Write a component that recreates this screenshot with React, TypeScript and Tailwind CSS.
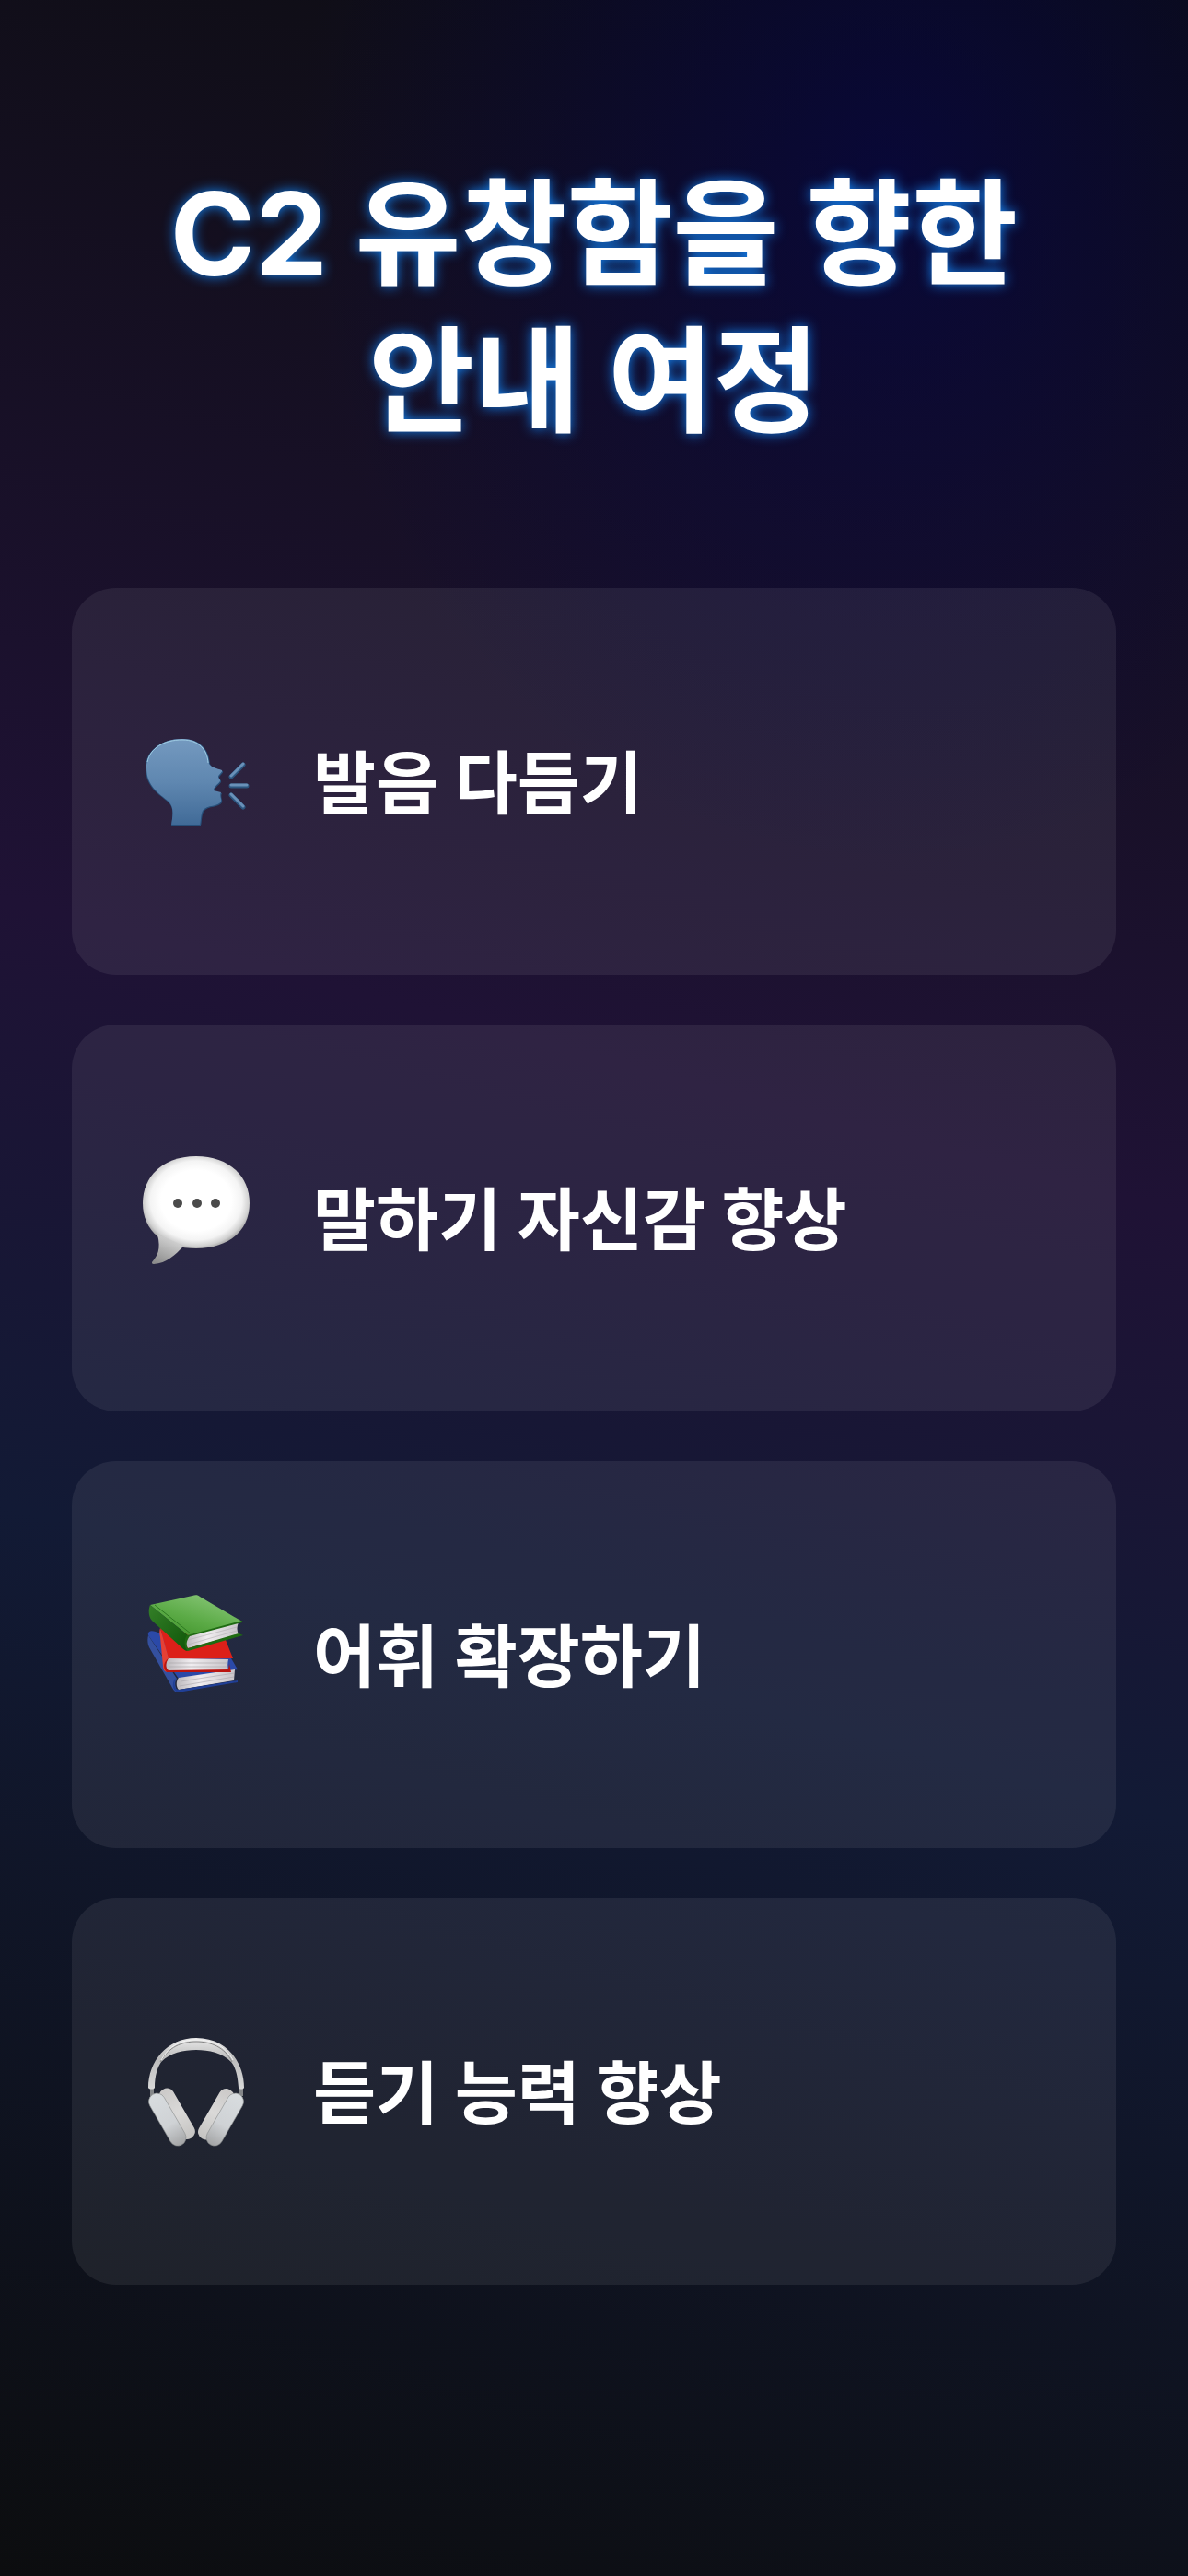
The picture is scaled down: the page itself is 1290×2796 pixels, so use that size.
import React from 'react';

const SpeakingHeadIcon: React.FC = () => (
  <svg viewBox="0 -5 150 150" className="w-full" aria-hidden="true">
    <defs>
      <linearGradient id="head" x1="0" y1="0" x2="0" y2="1">
        <stop offset="0" stopColor="#7499bf" />
        <stop offset="0.5" stopColor="#5f87b0" />
        <stop offset="1" stopColor="#406a97" />
      </linearGradient>
    </defs>
    <g strokeLinecap="round" strokeWidth="5">
      <path d="M111 63L124 50M111 73H128M111 83L124 96" stroke="#2c567f" />
      <path d="M111 62L124 49M111 72H128M111 82L124 95" stroke="#6990b8" strokeWidth="3" />
    </g>
    <path
      d="M46 117C47 108 50 98 43 91C33 82 18 75 18 53C18 35 35 22 58 22C78 22 87 34 88 49C89 53 97 55 102 57C103 59 98 62 98 64C98 66 101 67 100 69C97 73 93 75 92 79L101 81C99 85 102 88 101 91C98 97 86 94 81 101C79 105 79 113 78 117Z"
      fill="#274f79"
    />
    <path
      d="M46 116C47 107 50 97 43 90C33 81 19 74 19 53C19 35 35 22 58 22C77 22 86 34 87 49C89 53 96 54 101 56C102 58 97 61 97 63C97 65 100 66 99 68C96 72 92 74 92 78L100 80C98 84 101 87 100 90C97 96 85 93 80 100C78 104 78 112 77 116Z"
      fill="url(#head)"
    />
    <path d="M20 47C23 32 38 23 58 23C76 23 85 34 86 48" fill="none" stroke="#9ecbe2" strokeWidth="1" />
  </svg>
);

const SpeechBubbleIcon: React.FC = () => (
  <svg viewBox="0 9 150 150" className="w-full" aria-hidden="true">
    <defs>
      <radialGradient id="bubble" cx="0.5" cy="0.48" r="0.55">
        <stop offset="0.6" stopColor="#ffffff" />
        <stop offset="0.78" stopColor="#f4f4f4" />
        <stop offset="0.9" stopColor="#d0d0d0" />
        <stop offset="1" stopColor="#8f8f8f" />
      </radialGradient>
      <linearGradient id="tail" x1="0.2" y1="1" x2="0.7" y2="0">
        <stop offset="0" stopColor="#8c8c8c" />
        <stop offset="1" stopColor="#dcdcdc" />
      </linearGradient>
    </defs>
    <path
      d="M73 15C108 15 131 36 131 66C131 96 108 115 73 115C38 115 15 96 15 66C15 36 38 15 73 15Z"
      fill="url(#bubble)"
    />
    <path d="M31 100C35 116 31 123 25 130C25 131 25 132 27 132C41 131 50 122 59 113C52 108 42 104 31 100Z" fill="url(#tail)" />
    <g fill="#4a4a4a">
      <circle cx="53" cy="66" r="5" />
      <circle cx="74" cy="66" r="5" />
      <circle cx="94" cy="66" r="5" />
    </g>
  </svg>
);

const BooksIcon: React.FC = () => (
  <svg viewBox="0 8 150 150" className="w-full" aria-hidden="true">
    <defs>
      <linearGradient id="green" x1="0" y1="1" x2="0.7" y2="0">
        <stop offset="0" stopColor="#3c9026" />
        <stop offset="0.5" stopColor="#5cab47" />
        <stop offset="1" stopColor="#86c575" />
      </linearGradient>
      <linearGradient id="greenSpine" x1="0" y1="0" x2="1" y2="1">
        <stop offset="0" stopColor="#347f28" />
        <stop offset="1" stopColor="#0f5609" />
      </linearGradient>
      <linearGradient id="pages" x1="0" y1="0" x2="1" y2="0">
        <stop offset="0" stopColor="#bdb9bd" />
        <stop offset="0.4" stopColor="#f0edf0" />
        <stop offset="1" stopColor="#c9c5c9" />
      </linearGradient>
    </defs>
    {/* blue book */}
    <path d="M21 60C20 56 23 54 29 56L111 85L118 97L54 107Z" fill="#2b49a8" />
    <path d="M21 60L52 107C49 111 50 117 53 122C50 122 48 119 46 115L22 73C20 69 20 64 21 60Z" fill="#34509f" />
    <path d="M54 106L115 97L114 109L54 119C51 116 51 110 54 106Z" fill="url(#pages)" />
    <path d="M56 110L114 101M55 115L114 105" stroke="#aaa6ac" strokeWidth="0.6" />
    <path d="M51 106C48 112 50 119 54 119L118 109V111L53 122C47 120 46 111 51 106Z" fill="#203f96" />
    {/* red book */}
    <path d="M34 52L105 65L113 85L43 86Z" fill="#dc2019" />
    <path d="M34 52L43 85C39 90 39 95 42 100C38 100 37 96 37 93L34 62C33 58 33 55 34 52Z" fill="#e64035" />
    <path d="M43 85L108 86C107 90 107 94 108 98L42 99C39 94 40 88 43 85Z" fill="url(#pages)" />
    <path d="M43 90H107M43 94H107" stroke="#aaa6a8" strokeWidth="0.6" />
    <path d="M43 85C39 91 40 96 43 98L108 97L109 91L111 100L41 100C36 95 38 88 43 85Z" fill="#bb1510" />
    {/* green book */}
    <path d="M23 27L69 17C72 16 75 16 77 18L123 45L64 60Z" fill="url(#green)" />
    <path d="M23 27L64 60C61 65 61 71 64 77C61 77 59 75 57 73L25 44C21 40 21 32 23 27Z" fill="url(#greenSpine)" />
    <path d="M64 60L119 46C117 51 117 55 119 59L64 74C61 69 61 64 64 60Z" fill="url(#pages)" />
    <path d="M64 65L117 51M64 70L117 55" stroke="#b3b0b3" strokeWidth="0.6" />
    <path d="M63 60L123 44V46L66 61C62 66 62 71 64 74L119 58L124 60L64 77C59 73 60 64 63 60Z" fill="#1f6b12" />
    <path d="M28 27L67 58" stroke="#2c7a20" strokeWidth="1" />
  </svg>
);

const HeadphonesIcon: React.FC = () => (
  <svg viewBox="0 2 150 150" className="w-full" aria-hidden="true">
    <defs>
      <linearGradient id="band" x1="0" y1="0" x2="0" y2="1">
        <stop offset="0" stopColor="#e9e9e9" />
        <stop offset="0.4" stopColor="#bcbcbc" />
        <stop offset="1" stopColor="#d9d9d9" />
      </linearGradient>
      <linearGradient id="cup" x1="0" y1="0" x2="0" y2="1">
        <stop offset="0" stopColor="#d8dcdf" />
        <stop offset="0.6" stopColor="#cfd2d5" />
        <stop offset="1" stopColor="#a3a4a5" />
      </linearGradient>
      <linearGradient id="pad" x1="0" y1="0" x2="0" y2="1">
        <stop offset="0" stopColor="#cbc9c8" />
        <stop offset="0.5" stopColor="#dad9d8" />
        <stop offset="1" stopColor="#c4c3c1" />
      </linearGradient>
    </defs>
    <path d="M25 70V80M122 70V80" stroke="#858789" strokeWidth="4" />
    <path
      d="M21 71C21 43 41 17 73 17C106 17 125 43 125 71C124 73 120 73 119 71C118 58 116 49 111 43C101 33 87 30 73 30C59 30 45 33 35 43C31 49 28 58 28 71C27 73 22 73 21 71Z"
      fill="url(#band)"
    />
    <path d="M34 43C43 27 57 21 73 21C89 21 104 27 112 43" fill="none" stroke="#858585" strokeWidth="1" />
    <path d="M35 41C44 25 57 19 73 19C90 19 104 25 113 41" fill="none" stroke="#f4f4f4" strokeWidth="1" />
    <rect x="44" y="69" width="17" height="61" rx="8" fill="url(#pad)" transform="rotate(-30 52 100)" />
    <rect x="33" y="74" width="18" height="63" rx="9" fill="url(#cup)" stroke="#8f9192" strokeWidth="0.6" transform="rotate(-30 42 106)" />
    <rect x="86" y="69" width="17" height="61" rx="8" fill="url(#pad)" transform="rotate(30 94 100)" />
    <rect x="95" y="74" width="18" height="63" rx="9" fill="url(#cup)" stroke="#8f9192" strokeWidth="0.6" transform="rotate(30 104 106)" />
  </svg>
);

const goals = [
  { title: '발음 다듬기', icon: SpeakingHeadIcon },
  { title: '말하기 자신감 향상', icon: SpeechBubbleIcon },
  { title: '어휘 확장하기', icon: BooksIcon },
  { title: '듣기 능력 향상', icon: HeadphonesIcon },
];

const App: React.FC = () => {
  return (
    <main className="min-h-screen bg-[radial-gradient(ellipse_50%_27%_at_75%_7%,rgba(4,4,76,0.6),rgba(4,4,76,0.3)_50%,transparent),linear-gradient(195deg,#0c0d10_0%,#1f1235_42%,#121a35_63%,#0c0d0f_100%)] px-[78px] pt-[174px] pb-20 font-[Inter,'Noto_Sans_CJK_KR',sans-serif] text-white">
      <h1 className="text-center text-[125px] leading-[160px] font-bold [text-shadow:0_0_14px_#1482f0]">
        C2 유창함을 향한
        <br />
        안내 여정
      </h1>
      <ul className="mt-[144px] space-y-[54px]">
        {goals.map(({ title, icon: Icon }) => (
          <li key={title} className="flex h-[420px] items-center rounded-[48px] bg-white/7 pt-1 pl-[62px]">
            <div className="w-[150px] shrink-0">
              <Icon />
            </div>
            <h2 className="ml-[50px] text-[74px] leading-[104px] font-bold">{title}</h2>
          </li>
        ))}
      </ul>
    </main>
  );
};

export default App;
